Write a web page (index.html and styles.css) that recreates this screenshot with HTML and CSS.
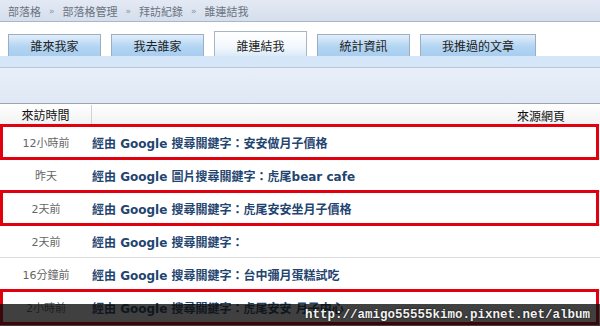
FILE: index.html
```html
<!DOCTYPE html>
<html lang="zh-Hant">
<head>
<meta charset="utf-8">
<title>誰連結我</title>
<link rel="stylesheet" href="styles.css">
</head>
<body>
<div class="page">
  <div class="crumbs">
    <span>部落格</span><span class="sep">»</span><span>部落格管理</span><span class="sep">»</span><span>拜訪紀錄</span><span class="sep">»</span><span>誰連結我</span>
  </div>
  <div class="tabs">
    <div class="tab">誰來我家</div>
    <div class="tab">我去誰家</div>
    <div class="tab active">誰連結我</div>
    <div class="tab">統計資訊</div>
    <div class="tab wide">我推過的文章</div>
  </div>
  <div class="band"></div>
  <div class="filter"></div>
  <div class="thead">
    <div class="c-time">來訪時間</div>
    <div class="c-src">來源網頁</div>
  </div>
  <div class="row marked">
    <div class="c-time">12小時前</div>
    <div class="c-link">經由 Google 搜尋關鍵字：安安做月子價格</div>
  </div>
  <div class="row">
    <div class="c-time">昨天</div>
    <div class="c-link">經由 Google 圖片搜尋關鍵字：虎尾bear cafe</div>
  </div>
  <div class="row marked">
    <div class="c-time">2天前</div>
    <div class="c-link">經由 Google 搜尋關鍵字：虎尾安安坐月子價格</div>
  </div>
  <div class="row">
    <div class="c-time">2天前</div>
    <div class="c-link">經由 Google 搜尋關鍵字：</div>
  </div>
  <div class="row">
    <div class="c-time">16分鐘前</div>
    <div class="c-link">經由 Google 搜尋關鍵字：台中彌月蛋糕試吃</div>
  </div>
  <div class="row marked">
    <div class="c-time">2小時前</div>
    <div class="c-link">經由 Google 搜尋關鍵字：虎尾安安 月子中心</div>
  </div>
  <div class="watermark">http://amigo55555kimo.pixnet.net/album</div>
</div>
</body>
</html>
```
FILE: styles.css
```css
html, body {
  margin: 0;
  padding: 0;
  background: #fff;
}
body {
  font-family: "DejaVu Sans", "Noto Sans CJK TC", sans-serif;
}
.page {
  position: relative;
  width: 600px;
  height: 326px;
  overflow: hidden;
}
.crumbs {
  height: 22px;
  box-sizing: border-box;
  padding-left: 8px;
  display: flex;
  align-items: center;
  font-size: 11px;
  color: #6a7380;
  background: linear-gradient(#e4eaf4, #d5deec);
  border-bottom: 1px solid #a9b6c8;
}
.crumbs .sep {
  margin: 0 8px;
  font-size: 9px;
  color: #8a93a0;
}
.tabs {
  height: 34px;
  box-sizing: border-box;
  display: flex;
  align-items: flex-end;
  gap: 10px;
  padding-left: 8px;
  background: #fff;
}
.tab {
  width: 93px;
  height: 22px;
  box-sizing: border-box;
  display: flex;
  align-items: center;
  justify-content: center;
  font-size: 12px;
  color: #222;
  font-family: "Noto Sans CJK TC", sans-serif;
  background: linear-gradient(#e3eef9, #b3d5f3 55%, #a8cdf0);
  border: 1px solid #9aafc4;
  border-bottom: none;
}
.tab.wide {
  width: 116px;
}
.tab.active {
  height: 25px;
  padding-top: 2px;
  background: linear-gradient(#ffffff, #f3f8fd 60%, #dbeaf8);
  border-color: #a8b6c4;
}
.band {
  height: 11px;
  background: #d4e6f7;
  border-bottom: 1px solid #b8c8d8;
}
.filter {
  height: 35px;
  background: linear-gradient(#e8eff9, #dfe8f4);
  border-bottom: 1px solid #9aa5b2;
}
.thead {
  height: 22px;
  display: flex;
  align-items: center;
  font-family: "Noto Sans CJK TC", sans-serif;
  font-size: 12px;
  color: #111;
  background: linear-gradient(#ffffff, #f1f1f3);
}
.thead .c-time {
  width: 91px;
  text-align: center;
  border-right: 1px solid #cfd3d8;
  line-height: 20px;
}
.thead .c-src {
  flex: 1;
  text-align: right;
  padding-right: 35px;
}
.row {
  position: relative;
  height: 32px;
  display: flex;
  align-items: center;
  border-bottom: 1px solid #dcdcdc;
}
.row:first-of-type {
  margin-top: 1px;
}
.row .c-time {
  width: 92px;
  text-align: center;
  font-size: 11px;
  color: #666;
}
.row .c-link {
  flex: 1;
  font-size: 12px;
  font-weight: bold;
  color: #1f4570;
}
.row.marked::after {
  content: "";
  position: absolute;
  left: 0;
  right: 1px;
  top: -2px;
  bottom: -2px;
  border: 3px solid #e1000e;
  pointer-events: none;
}
.watermark {
  position: absolute;
  left: 0;
  right: 0;
  bottom: 0;
  height: 22px;
  background: rgba(10, 10, 10, 0.78);
  color: #f2f2f2;
  font-family: "Liberation Mono", monospace;
  font-size: 12.5px;
  font-weight: bold;
  line-height: 22px;
  text-align: right;
  padding-right: 10px;
  text-shadow: 0 0 2px #000;
}
```
